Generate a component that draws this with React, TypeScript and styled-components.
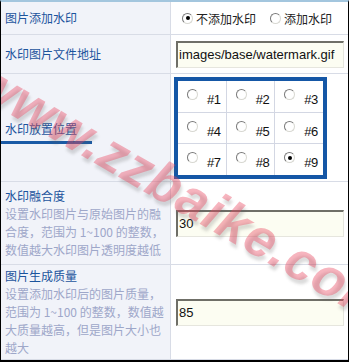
import styled, { createGlobalStyle } from "styled-components"

const GlobalStyle = createGlobalStyle`
  body {
    margin: 0;
    background: #fff;
    font-family: "Noto Sans CJK SC", "Liberation Sans", sans-serif;
  }
`

const Table = styled.div`
  position: relative;
  width: 349px;
  height: 362px;
  box-sizing: border-box;
  border-top: 2px solid #a3c6de;
  border-left: 1px solid #000;
  border-right: 1px solid #000;
  border-bottom: 2px solid #000;
  overflow: hidden;
  display: flex;
  flex-direction: column;
`

const Row = styled.div<{ $h: number }>`
  display: grid;
  grid-template-columns: 170px 1fr;
  height: ${(p) => p.$h}px;
  flex: none;
  box-sizing: border-box;
  border-bottom: 1px solid #d8dce6;
  &:last-child {
    border-bottom: none;
  }
`

const Label = styled.div<{ $pt?: number }>`
  box-sizing: border-box;
  background: #f1f3f9;
  border-right: 1px solid #d8dce6;
  padding: ${(p) => p.$pt || 0}px 3px 0 4px;
  display: flex;
  flex-direction: column;
  justify-content: center;
  font-size: 12px;
  line-height: 18px;
`

const Title = styled.div`
  color: #1c549d;
`

const Desc = styled.div`
  color: #9ea7c9;
`

const Underline = styled.div`
  width: 92px;
  height: 3px;
  margin: 3px 0 0 -5px;
  background: #1a5aa6;
`

const Cell = styled.div<{ $top?: boolean }>`
  display: flex;
  align-items: ${(p) => (p.$top ? "flex-start" : "center")};
  padding: ${(p) => (p.$top ? "3px 0 0 3px" : "0 4px 0 5px")};
`

const RadioGroup = styled.div`
  display: flex;
  align-items: center;
  padding-left: 11px;
  font-size: 12px;
  color: #222;
`

const RadioItem = styled.label`
  display: flex;
  align-items: center;
  margin-right: 14px;
`

const Radio = styled.span<{ $on?: boolean }>`
  position: relative;
  width: 11px;
  height: 11px;
  box-sizing: border-box;
  border-radius: 50%;
  border: 1px solid;
  border-color: #7a7a7a #d8d8d2 #d8d8d2 #7a7a7a;
  background: #fff;
  flex: none;
  margin-right: 3px;
  &::after {
    content: "";
    display: ${(p) => (p.$on ? "block" : "none")};
    position: absolute;
    left: 2.5px;
    top: 2.5px;
    width: 4px;
    height: 4px;
    border-radius: 50%;
    background: #000;
  }
`

const TextInput = styled.div`
  width: 168px;
  height: 27px;
  box-sizing: border-box;
  border-style: solid;
  border-width: 2px 1px 1px 2px;
  border-color: #6f6f67 #e6e6de #e6e6de #6f6f67;
  background: #fcfdf2;
  padding-left: 1px;
  display: flex;
  align-items: center;
  font-family: "Liberation Sans", sans-serif;
  font-size: 13px;
  color: #111;
`

const PosBox = styled.div`
  width: 153px;
  height: 102px;
  box-sizing: border-box;
  border: 4px solid #1557a6;
  display: grid;
  grid-template-columns: repeat(3, 1fr);
  grid-template-rows: repeat(3, 1fr);
  gap: 1px;
  background: #d3d7e3;
`

const PosCell = styled.div`
  background: #fff;
  display: flex;
  align-items: flex-start;
  padding: 8px 0 0 9px;
  font-family: "Liberation Sans", sans-serif;
  font-size: 13px;
  letter-spacing: -0.5px;
  color: #111;
`

const PosText = styled.span`
  margin: 4px 0 0 6px;
  line-height: 13px;
`

const Watermark = styled.div`
  position: absolute;
  left: -6px;
  top: 46px;
  transform-origin: 0 0;
  transform: rotate(30deg);
  font-family: "Liberation Sans", sans-serif;
  font-weight: bold;
  font-style: italic;
  font-size: 54px;
  letter-spacing: 1px;
  white-space: nowrap;
  color: rgba(236, 70, 95, 0.4);
  text-shadow: 3px 3px 3px rgba(90, 90, 90, 0.22);
  pointer-events: none;
`

const positions = [1, 2, 3, 4, 5, 6, 7, 8, 9]

export default function App() {
  return (
    <>
      <GlobalStyle />
      <Table>
        <Row $h={33}>
          <Label>
            <Title>图片添加水印</Title>
          </Label>
          <RadioGroup>
            <RadioItem>
              <Radio $on />
              不添加水印
            </RadioItem>
            <RadioItem>
              <Radio />
              添加水印
            </RadioItem>
          </RadioGroup>
        </Row>
        <Row $h={39}>
          <Label>
            <Title>水印图片文件地址</Title>
          </Label>
          <Cell>
            <TextInput>images/base/watermark.gif</TextInput>
          </Cell>
        </Row>
        <Row $h={108}>
          <Label $pt={8}>
            <Title>水印放置位置</Title>
            <Underline />
          </Label>
          <Cell $top>
            <PosBox>
              {positions.map((n) => (
                <PosCell key={n}>
                  <Radio $on={n === 9} />
                  <PosText>#{n}</PosText>
                </PosCell>
              ))}
            </PosBox>
          </Cell>
        </Row>
        <Row $h={83}>
          <Label>
            <Title>水印融合度</Title>
            <Desc>设置水印图片与原始图片的融合度，范围为 1~100 的整数，数值越大水印图片透明度越低</Desc>
          </Label>
          <Cell>
            <TextInput>30</TextInput>
          </Cell>
        </Row>
        <Row $h={95}>
          <Label>
            <Title>图片生成质量</Title>
            <Desc>设置添加水印后的图片质量，范围为 1~100 的整数，数值越大质量越高，但是图片大小也越大</Desc>
          </Label>
          <Cell>
            <TextInput>85</TextInput>
          </Cell>
        </Row>
        <Watermark>www.zzbaike.com</Watermark>
      </Table>
    </>
  )
}
